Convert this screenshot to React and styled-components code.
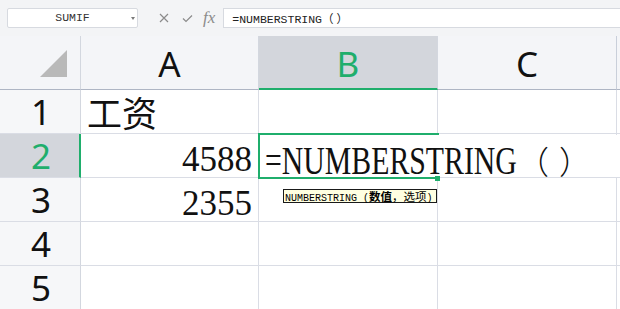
import React from "react";
import styled, { createGlobalStyle } from "styled-components";

const GREEN = "#1fae6c";
const GRID = "#dadde5";
const HEAD_LINE = "#d3d7df";
const HEAD_BG = "#f4f5f8";
const ROWHEAD_BG = "#f6f7f9";
const SEL_BG = "#d3d6dc";

const GlobalStyle = createGlobalStyle`
  html, body { margin: 0; padding: 0; background: #fff; overflow: hidden; }
  #root { width: 620px; height: 309px; }
`;

const Page = styled.div`
  width: 620px;
  height: 309px;
  overflow: hidden;
  display: flex;
  flex-direction: column;
  background: #fff;
`;

const TopBar = styled.div`
  height: 36px;
  flex: none;
  box-sizing: border-box;
  background: #f3f4f6;
  display: flex;
  align-items: flex-start;
  padding: 8px 0 0 7px;
`;

const NameBox = styled.div`
  width: 131px;
  height: 20px;
  box-sizing: border-box;
  background: #fff;
  border: 1px solid #d7dae0;
  border-radius: 2px;
  display: flex;
  align-items: center;
  font: 11.5px/18px "Liberation Mono", monospace;
  color: #333;
`;

const NameText = styled.span`
  flex: 1;
  text-align: center;
  padding-left: 6px;
`;

const Caret = styled.span`
  width: 0;
  height: 0;
  border-left: 2.5px solid transparent;
  border-right: 2.5px solid transparent;
  border-top: 3px solid #7a7a7a;
  margin-right: 2px;
`;

const ToolIcons = styled.div`
  height: 20px;
  display: flex;
  align-items: center;
  margin-left: 21px;
  color: #8b8b8b;
`;

const IconSlot = styled.span`
  display: flex;
  align-items: center;
  margin-right: ${(p) => p.$gap}px;
`;

const Fx = styled.span`
  font: italic 17px/20px "Liberation Serif", serif;
  color: #8b8b8b;
  margin-right: 8px;
`;

const FormulaInput = styled.div`
  flex: 1;
  height: 20px;
  box-sizing: border-box;
  background: #fff;
  border: 1px solid #d7dae0;
  border-right: none;
  padding-left: 8px;
  font: 11.5px/18px "Liberation Mono", "Noto Sans CJK SC", monospace;
  color: #222;
  white-space: nowrap;
`;

const BarParen = styled.span`
  font-family: "Noto Sans CJK SC", sans-serif;
  letter-spacing: 3px;
`;

const Sheet = styled.div`
  position: relative;
  flex: 1;
  display: grid;
  grid-template-columns: 81px 178px 179px 179px 1fr;
  grid-template-rows: 54px repeat(5, 44px);
`;

const Corner = styled.div`
  box-sizing: border-box;
  background: ${HEAD_BG};
  border-right: 1px solid ${HEAD_LINE};
  border-bottom: 1px solid #aeb5c4;
  display: flex;
  justify-content: flex-end;
  align-items: flex-end;
  padding: 0 13px 12px 0;
`;

const ColHeader = styled.div`
  box-sizing: border-box;
  background: ${(p) => (p.$active ? SEL_BG : HEAD_BG)};
  border-right: 1px solid ${(p) => (p.$last ? "#c9cfda" : HEAD_LINE)};
  border-bottom: ${(p) => (p.$active ? `2px solid ${GREEN}` : "1px solid #aeb5c4")};
  color: ${(p) => (p.$active ? GREEN : "#111")};
  font: 35px/1 "Noto Sans", sans-serif;
  display: flex;
  align-items: center;
  justify-content: center;
  padding-top: 2px;
`;

const HeaderFill = styled.div`
  background: ${HEAD_BG};
  border-bottom: 1px solid #aeb5c4;
`;

const RowHeader = styled.div`
  box-sizing: border-box;
  background: ${(p) => (p.$active ? SEL_BG : ROWHEAD_BG)};
  border-right: ${(p) => (p.$active ? `2px solid ${GREEN}` : `1px solid ${HEAD_LINE}`)};
  border-bottom: 1px solid ${GRID};
  color: ${(p) => (p.$active ? GREEN : "#111")};
  font: 35px/28px "Noto Sans", sans-serif;
  display: flex;
  align-items: center;
  justify-content: center;
  padding-left: ${(p) => (p.$active ? 3 : 2)}px;
`;

const Cell = styled.div`
  box-sizing: border-box;
  background: #fff;
  border-right: 1px solid ${GRID};
  border-bottom: 1px solid ${GRID};
  padding: 9px 6px 0 6px;
  font: 35px/34px "Liberation Serif", "Noto Sans CJK SC", serif;
  color: #111;
  text-align: ${(p) => p.$align || "left"};
  white-space: nowrap;
  overflow: hidden;
`;

const BodyFill = styled.div`
  background: #fff;
  border-bottom: 1px solid ${GRID};
`;

const SelectionFrame = styled.div`
  position: absolute;
  left: 258px;
  top: 97px;
  width: 181px;
  height: 46px;
  box-sizing: border-box;
  border: 2px solid ${GREEN};
  z-index: 2;
`;

const FillHandle = styled.div`
  position: absolute;
  left: 435px;
  top: 140px;
  width: 5px;
  height: 5px;
  background: ${GREEN};
  z-index: 4;
`;

const Editor = styled.div`
  position: absolute;
  left: 260px;
  top: 99px;
  height: 42px;
  padding: 0 20px 0 5px;
  background: #fff;
  font: 39px/50px "Liberation Serif", serif;
  color: #111;
  white-space: nowrap;
  z-index: 3;
`;

const EditLatin = styled.span`
  display: inline-block;
  width: 252px;
  white-space: nowrap;
`;

const Condensed = styled.span`
  display: inline-block;
  transform: scaleX(0.764);
  transform-origin: 0 0;
`;

const EditParen = styled.span`
  font-family: "Noto Sans CJK SC", sans-serif;
  font-size: 32px;
  font-weight: 300;
  letter-spacing: 10px;
`;

const Tooltip = styled.div`
  position: absolute;
  left: 283px;
  top: 153px;
  height: 14px;
  box-sizing: border-box;
  padding: 0 3px 0 1px;
  background: #ffffe1;
  border: 1px solid #1a1a1a;
  font: 10px/12px "Liberation Mono", "Noto Sans CJK SC", monospace;
  color: #000;
  white-space: nowrap;
  z-index: 5;
`;

const TipCjk = styled.span`
  font-family: "Noto Sans CJK SC", sans-serif;
  font-size: 11.5px;
  font-weight: ${(p) => (p.$bold ? 700 : 400)};
`;

const CornerTriangle = () => (
  <svg width="27" height="27" viewBox="0 0 27 27">
    <polygon points="0,27 27,27 27,0" fill="#b9b9b9" />
  </svg>
);

const CloseIcon = () => (
  <svg width="10" height="10" viewBox="0 0 10 10">
    <path d="M1 1 L9 9 M9 1 L1 9" stroke="#8b8b8b" strokeWidth="1.2" fill="none" />
  </svg>
);

const CheckIcon = () => (
  <svg width="11" height="9" viewBox="0 0 11 9">
    <polyline points="1,4.5 4,7.5 10,1.5" stroke="#8b8b8b" strokeWidth="1.2" fill="none" />
  </svg>
);

const columns = ["A", "B", "C"];
const rows = [
  { n: 1, cells: [{ v: "工资" }, { v: "" }, { v: "" }] },
  { n: 2, cells: [{ v: "4588", align: "right" }, { v: "" }, { v: "" }] },
  { n: 3, cells: [{ v: "2355", align: "right" }, { v: "" }, { v: "" }] },
  { n: 4, cells: [{ v: "" }, { v: "" }, { v: "" }] },
  { n: 5, cells: [{ v: "" }, { v: "" }, { v: "" }] },
];

export default function App() {
  return (
    <Page>
      <GlobalStyle />
      <TopBar>
        <NameBox>
          <NameText>SUMIF</NameText>
          <Caret />
        </NameBox>
        <ToolIcons>
          <IconSlot $gap={13}>
            <CloseIcon />
          </IconSlot>
          <IconSlot $gap={10}>
            <CheckIcon />
          </IconSlot>
          <Fx>fx</Fx>
        </ToolIcons>
        <FormulaInput>
          =NUMBERSTRING<BarParen>（）</BarParen>
        </FormulaInput>
      </TopBar>
      <Sheet>
        <Corner>
          <CornerTriangle />
        </Corner>
        {columns.map((c, i) => (
          <ColHeader key={c} $active={c === "B"} $last={i === columns.length - 1}>
            {c}
          </ColHeader>
        ))}
        <HeaderFill />
        {rows.map((r) => (
          <React.Fragment key={r.n}>
            <RowHeader $active={r.n === 2}>{r.n}</RowHeader>
            {r.cells.map((cell, i) => (
              <Cell key={i} $align={cell.align}>
                {cell.v}
              </Cell>
            ))}
            <BodyFill />
          </React.Fragment>
        ))}
        <SelectionFrame />
        <FillHandle />
        <Editor>
          <EditLatin>
            <Condensed>=NUMBERSTRING</Condensed>
          </EditLatin>
          <EditParen>（）</EditParen>
        </Editor>
        <Tooltip>
          NUMBERSTRING (<TipCjk $bold>数值</TipCjk>
          <TipCjk>，选项</TipCjk>)
        </Tooltip>
      </Sheet>
    </Page>
  );
}
